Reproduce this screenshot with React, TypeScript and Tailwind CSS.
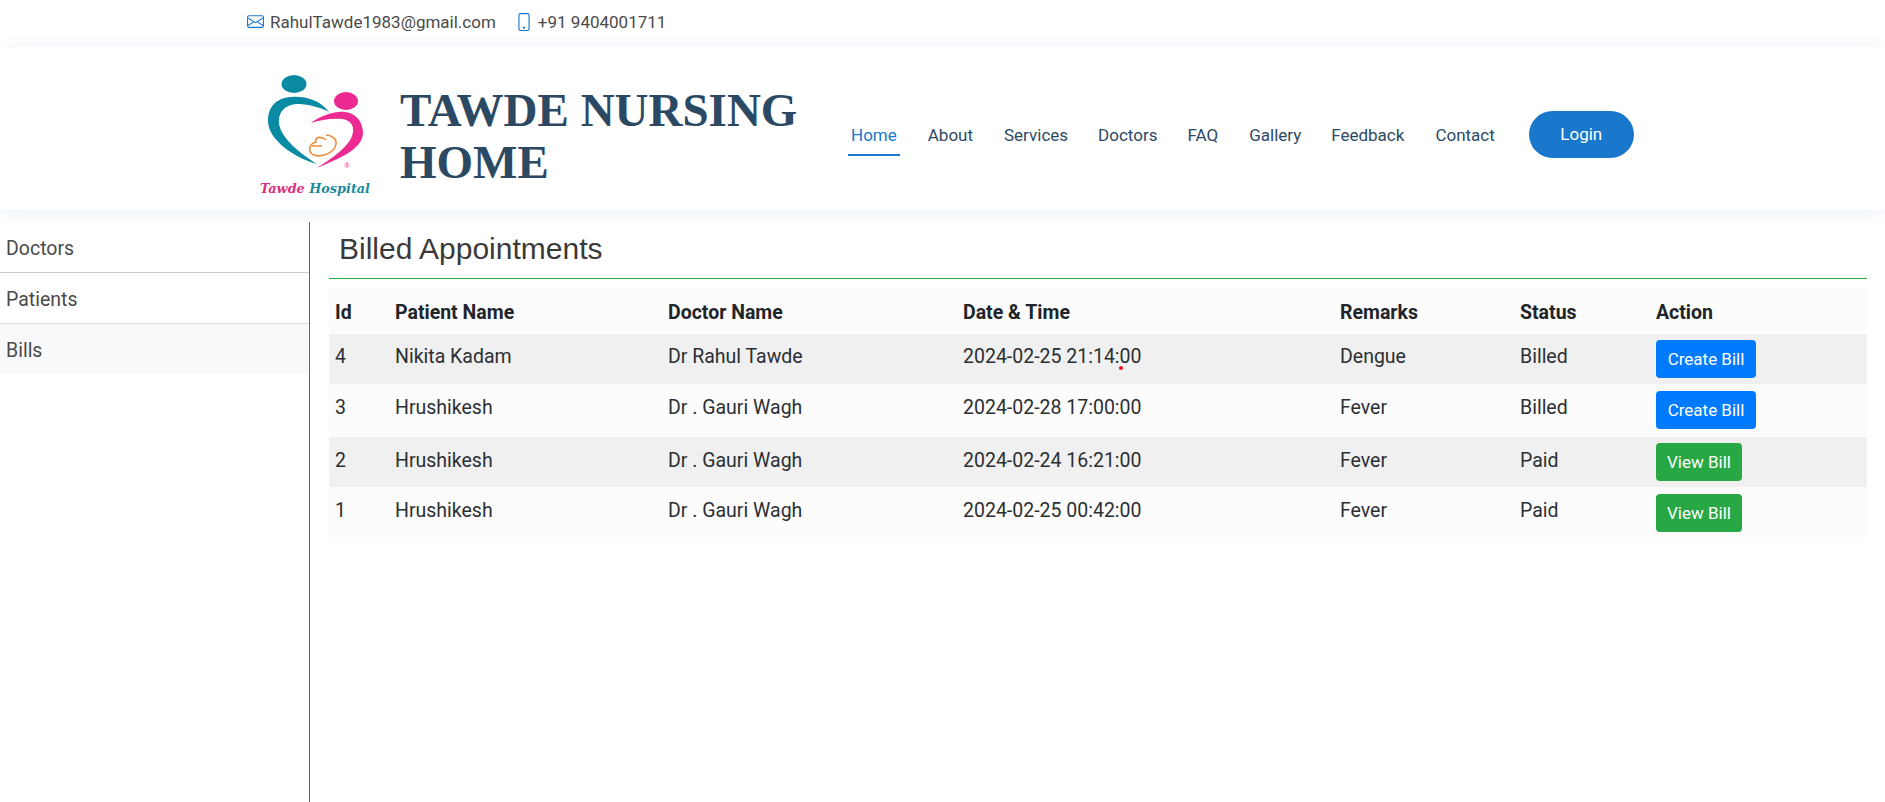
import { BsEnvelope, BsPhone } from 'react-icons/bs';

const navLinks = [
  { label: 'About', gap: 'ml-[28px]' },
  { label: 'Services', gap: 'ml-[31px]' },
  { label: 'Doctors', gap: 'ml-[30px]' },
  { label: 'FAQ', gap: 'ml-[30px]' },
  { label: 'Gallery', gap: 'ml-[31px]' },
  { label: 'Feedback', gap: 'ml-[30px]' },
  { label: 'Contact', gap: 'ml-[31px]' },
];

const columns = ['w-[60px]', 'w-[273px]', 'w-[295px]', 'w-[377px]', 'w-[180px]', 'w-[136px]', 'w-[217px]'];
const headers = ['Id', 'Patient Name', 'Doctor Name', 'Date & Time', 'Remarks', 'Status', 'Action'];

const rows = [
  { id: 4, patient: 'Nikita Kadam', doctor: 'Dr Rahul Tawde', date: '2024-02-25 21:14:00', remarks: 'Dengue', status: 'Billed', rowClass: 'h-[50px] bg-[#f0f0f0]', textPad: 'pt-[8px]', btnPad: 'pt-[6px]' },
  { id: 3, patient: 'Hrushikesh', doctor: 'Dr . Gauri Wagh', date: '2024-02-28 17:00:00', remarks: 'Fever', status: 'Billed', rowClass: 'h-[53px] bg-[#fcfcfc]', textPad: 'pt-[9px]', btnPad: 'pt-[7px]' },
  { id: 2, patient: 'Hrushikesh', doctor: 'Dr . Gauri Wagh', date: '2024-02-24 16:21:00', remarks: 'Fever', status: 'Paid', rowClass: 'h-[50px] bg-[#f0f0f0]', textPad: 'pt-[9px]', btnPad: 'pt-[6px]' },
  { id: 1, patient: 'Hrushikesh', doctor: 'Dr . Gauri Wagh', date: '2024-02-25 00:42:00', remarks: 'Fever', status: 'Paid', rowClass: 'h-[51px] bg-[#fcfcfc]', textPad: 'pt-[9px]', btnPad: 'pt-[7px]' },
];

function Logo() {
  return (
    <svg viewBox="250 65 130 135" className="w-[130px] h-[135px] shrink-0">
      <ellipse cx="294" cy="84" rx="12.5" ry="9" fill="#0b8aa3" />
      <ellipse cx="346" cy="101" rx="12" ry="9" fill="#ec2a91" />
      <path d="M329 112C320 100 305 96 291 97C275 98 268 108 268 121C268 140 295 158 317 164C298 152 277 135 279 119C280 108 290 103 300 104C312 105 322 108 329 112Z" fill="#0b8aa3" />
      <path d="M311 123C322 115 335 111 345 112C356 113 363 122 363 133C363 150 335 160 317 168C332 158 351 146 353 132C354 125 350 120 342 119C332 118 320 120 311 123Z" fill="#ec2a91" />
      <path d="M326 140C320 135 314 138 316 142C309 144 307 152 314 155C323 158 335 152 336 144C337 139 331 135 326 135M312 146H322" fill="none" stroke="#f08c3a" strokeWidth="1.6" />
      <text x="347" y="168" fontSize="7" textAnchor="middle" fill="#ec2a91" fontFamily="'Liberation Sans', sans-serif">®</text>
      <text x="260" y="193" fontSize="13.5" fontWeight="700" fontStyle="italic" fontFamily="'DejaVu Serif', serif" textLength="110" lengthAdjust="spacingAndGlyphs">
        <tspan fill="#d9307f">Tawde </tspan>
        <tspan fill="#1b8a9c">Hospital</tspan>
      </text>
    </svg>
  );
}

export default function App() {
  return (
    <div className="flex min-h-screen flex-col bg-white font-['Roboto',sans-serif] text-[19.5px] text-[#4a4a4a]">
      {/* top bar */}
      <div className="flex h-[47px] shrink-0 items-center pb-[1px] pl-[247px] text-[17px]">
        <BsEnvelope size={17} className="mb-[3px] text-[#1977cc]" />
        <span className="ml-[6px]">RahulTawde1983@gmail.com</span>
        <BsPhone size={18} className="mb-[3px] ml-[19px] text-[#1977cc]" />
        <span className="ml-[5px]">+91 9404001711</span>
      </div>

      {/* header */}
      <header className="relative z-10 flex h-[163px] shrink-0 items-center bg-white pt-[8px] pl-[250px] shadow-[0_2px_15px_rgba(25,119,204,0.1)]">
        <Logo />
        <h1 className="mt-[7px] ml-[20px] w-[420px] font-['Liberation_Serif',serif] text-[47px] leading-[52px] font-bold text-[#2c4964]">
          TAWDE NURSING HOME
        </h1>
        <nav className="mt-[3px] ml-[28px] flex items-center text-[17px] text-[#2c4964]">
          <a className="border-b-2 border-[#1977cc] px-[3px] pt-[11px] pb-[6px] text-[#1977cc]">Home</a>
          {navLinks.map((link) => (
            <a key={link.label} className={`pt-[11px] pb-[8px] ${link.gap}`}>
              {link.label}
            </a>
          ))}
          <a className="ml-[34px] flex h-[47px] w-[105px] items-center justify-center rounded-[25px] bg-[#1977cc] pt-[2px] text-white">
            Login
          </a>
        </nav>
      </header>

      <div className="mt-[12px] flex flex-1">
        {/* sidebar */}
        <aside className="w-[310px] shrink-0 border-r border-[#007bff]">
          <div className="flex h-[51px] items-center border-b border-[#cccccc] pt-[3px] pl-[6px]">Doctors</div>
          <div className="flex h-[51px] items-center border-b border-[#dddddd] pt-[3px] pl-[6px]">Patients</div>
          <div className="flex h-[50px] items-center bg-[#f8f9fa] pt-[3px] pl-[6px]">Bills</div>
        </aside>

        {/* main */}
        <main className="ml-[19px] w-[1538px]">
          <h2 className="h-[57px] border-b border-[#28a745] pt-[9px] pl-[10px] font-['Liberation_Sans',sans-serif] text-[30px] leading-[36px] text-[#3a3a3a]">
            Billed Appointments
          </h2>
          <table className="mt-[9px] w-full table-fixed border-collapse text-[#2b2f33]">
            <colgroup>
              {columns.map((width) => (
                <col key={width} className={width} />
              ))}
            </colgroup>
            <thead>
              <tr className="h-[46px] bg-[#fcfcfc]">
                {headers.map((header) => (
                  <th key={header} className="px-[6px] pt-[3px] text-left align-middle font-bold text-[#212529]">
                    {header}
                  </th>
                ))}
              </tr>
            </thead>
            <tbody>
              {rows.map((row) => (
                <tr key={row.id} className={row.rowClass}>
                  <td className={`px-[6px] align-top ${row.textPad}`}>{row.id}</td>
                  <td className={`px-[6px] align-top ${row.textPad}`}>{row.patient}</td>
                  <td className={`px-[6px] align-top ${row.textPad}`}>{row.doctor}</td>
                  <td className={`px-[6px] align-top ${row.textPad}`}>
                    <span className="relative">
                      {row.date}
                      {row.id === 4 && (
                        <span className="absolute top-[21px] left-[156px] h-[4px] w-[4px] rounded-full bg-[#e8141c]" />
                      )}
                    </span>
                  </td>
                  <td className={`px-[6px] align-top ${row.textPad}`}>{row.remarks}</td>
                  <td className={`px-[6px] align-top ${row.textPad}`}>{row.status}</td>
                  <td className={`px-[6px] align-top ${row.btnPad}`}>
                    {row.status === 'Billed' ? (
                      <button className="h-[38px] w-[100px] rounded-[4px] bg-[#007bff] pt-[1px] text-[17px] text-white">Create Bill</button>
                    ) : (
                      <button className="h-[38px] w-[86px] rounded-[4px] bg-[#28a745] pt-[1px] text-[17px] text-white">View Bill</button>
                    )}
                  </td>
                </tr>
              ))}
            </tbody>
          </table>
        </main>
      </div>
    </div>
  );
}
